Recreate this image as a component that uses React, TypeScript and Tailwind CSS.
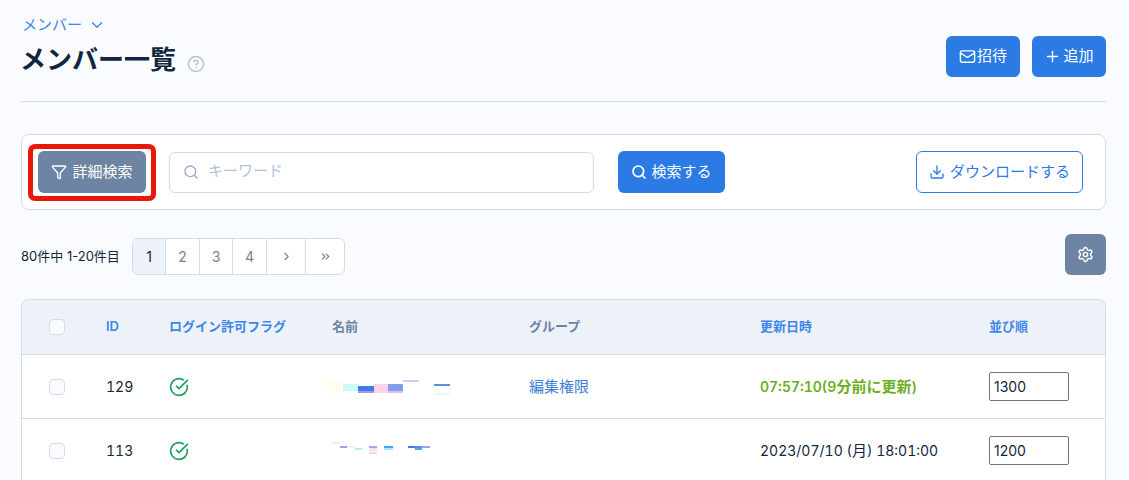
import { ChevronDown, ChevronRight, ChevronsRight, CircleCheckBig, CircleHelp, Download, Funnel, Mail, Plus, Search, Settings } from "lucide-react";

const font = "font-['Inter','Noto_Sans_CJK_JP',sans-serif]";
const cols = "grid grid-cols-[84px_63px_163px_197px_231px_229px_1fr] items-center";

const row1 = [
  [-5, 3, 16, 13, "#fffff0"],
  [11, 7, 15, 7, "#ccf9fd"],
  [26, 9, 16, 5, "#3a7de6"],
  [26, 14, 16, 2, "#b192e0"],
  [42, 7, 14, 9, "#fdd3e8"],
  [56, 7, 15, 7, "#7f9fe8"],
  [56, 14, 15, 2, "#f0b8e4"],
  [71, 3, 16, 2, "#c5cff0"],
  [102, 7, 16, 2, "#5b8ee6"],
  [102, 16, 16, 2, "#f3f3f5"],
] as const;

const row2 = [
  [0, 1, 8, 2, "#fdeaee"],
  [8, 5, 7, 2, "#8ea8e8"],
  [15, 5, 8, 2, "#fdeef2"],
  [23, 7, 7, 2, "#b5ebfb"],
  [37, 5, 8, 2, "#bd98e6"],
  [37, 7, 8, 3, "#fcdde8"],
  [37, 11, 8, 2, "#e4d8ee"],
  [52, 5, 9, 2, "#3fa9f5"],
  [52, 7, 9, 2, "#a8e8fb"],
  [76, 5, 7, 2, "#3a7de6"],
  [83, 5, 7, 2, "#5b8ee6"],
  [83, 7, 7, 2, "#45aaf2"],
  [90, 5, 8, 2, "#93a8ea"],
] as const;

function Blurred({ blocks }: { blocks: readonly (readonly [number, number, number, number, string])[] }) {
  return (
    <svg width="130" height="20" className="overflow-visible">
      {blocks.map(([x, y, w, h, c], i) => (
        <rect key={i} x={x} y={y} width={w} height={h} fill={c} />
      ))}
    </svg>
  );
}

function Check() {
  return <div className="ml-[27px] w-4 h-4 rounded-[4px] border border-[#d2ddec] bg-[#f9fbfd]" />;
}

function OrderInput({ value }: { value: string }) {
  return (
    <input
      defaultValue={value}
      className="w-20 h-[29px] px-1 border border-[#767676] rounded-[2px] bg-white text-sm normal-nums text-[#12263f] outline-none"
    />
  );
}

export default function App() {
  return (
    <div className={`${font} h-[480px] overflow-hidden bg-[#fafbfe] pl-[21px] pr-[23px] text-[#12263f]`}>
      <header className="flex justify-between border-b border-[#d2ddec] h-[102px]">
        <div>
          <div className="pt-[15px] pl-px flex items-center gap-[6px] text-[15px] leading-[20px] text-[#3f86ea]">
            メンバー <ChevronDown size={18} strokeWidth={1.75} />
          </div>
          <div className="mt-[6px] -ml-px flex items-center gap-[11px]">
            <h1 className="text-[26px] leading-[38px] font-bold">メンバー一覧</h1>
            <CircleHelp size={18} className="text-[#b1c2d9] mt-[7px]" />
          </div>
        </div>
        <div className="pt-9 flex gap-3">
          <button className="w-[74px] h-[41px] flex items-center justify-center gap-px rounded-md bg-[#2c7be5] text-[15px] text-white">
            <Mail size={17} /> 招待
          </button>
          <button className="w-[74px] h-[41px] flex items-center justify-center gap-[2px] rounded-md bg-[#2c7be5] text-[15px] text-white">
            <Plus size={17} /> 追加
          </button>
        </div>
      </header>

      <section className="mt-8 h-[76px] flex items-center rounded-lg border border-[#d2ddec] bg-white pl-4 pr-[22px] relative">
        <button className="w-[108px] h-[42px] flex items-center justify-center gap-[5px] rounded-md bg-[#6e84a3] text-[15px] text-white">
          <Funnel size={16} /> 詳細検索
        </button>
        <div className="absolute left-[6px] top-[9px] w-[128px] h-[57px] rounded-[7px] border-[5px] border-[#e8170a]" />
        <div className="ml-[23px] w-[425px] h-[41px] flex items-center rounded-md border border-[#d2ddec] bg-white px-[13px] gap-[9px]">
          <Search size={16} className="text-[#95aac9]" />
          <span className="text-[15px] mb-[2px] text-[#b1c2d9]">キーワード</span>
        </div>
        <button className="ml-6 w-[107px] h-[42px] flex items-center justify-center gap-[4px] rounded-md bg-[#2c7be5] text-[15px] text-white">
          <Search size={16} strokeWidth={2.5} /> 検索する
        </button>
        <button className="ml-auto w-[167px] h-[42px] flex items-center justify-center gap-[5px] rounded-md border border-[#2c7be5] bg-white text-[15px] text-[#2c7be5]">
          <Download size={16} /> ダウンロードする
        </button>
      </section>

      <div className="mt-6 flex justify-between items-start h-[41px]">
        <div className="flex items-center mt-1">
          <span className="text-[13px] w-[111px]">80件中 1-20件目</span>
          <div className="flex h-[37px] rounded-md border border-[#d2ddec] bg-white text-sm text-[#6e84a3] divide-x divide-[#d2ddec] overflow-hidden">
            <span className="w-[33px] flex items-center justify-center bg-[#edf2f9] text-[#12263f]">1</span>
            <span className="w-[34px] flex items-center justify-center">2</span>
            <span className="w-[33px] flex items-center justify-center">3</span>
            <span className="w-[34px] flex items-center justify-center">4</span>
            <span className="w-[39px] flex items-center justify-center"><ChevronRight size={13} /></span>
            <span className="w-[38px] flex items-center justify-center"><ChevronsRight size={13} /></span>
          </div>
        </div>
        <button className="w-[41px] h-[41px] flex items-center justify-center rounded-md bg-[#6e84a3] text-white">
          <Settings size={17} />
        </button>
      </div>

      <section className="mt-6 rounded-t-lg border border-[#d2ddec] border-b-0 bg-white">
        <div className={`${cols} h-[55px] rounded-t-lg bg-[#edf2f9] border-b border-[#d2ddec] text-[13px] font-semibold text-[#3f86ea]`}>
          <Check />
          <span>ID</span>
          <span>ログイン許可フラグ</span>
          <span className="text-[#6e84a3]">名前</span>
          <span className="text-[#6e84a3]">グループ</span>
          <span>更新日時</span>
          <span>並び順</span>
        </div>
        <div className={`${cols} h-16 border-b border-[#d2ddec] text-sm tabular-nums`}>
          <Check />
          <span>129</span>
          <CircleCheckBig size={20} className="text-[#1ca45e]" />
          <Blurred blocks={row1} />
          <span className="text-[15px] text-[#3f7fd8]">編集権限</span>
          <span className="font-semibold text-[#6bb022]">
            07:57:10(9<span className="text-[15px]">分前に更新</span>)
          </span>
          <OrderInput value="1300" />
        </div>
        <div className={`${cols} h-[63px] text-sm tabular-nums`}>
          <Check />
          <span>113</span>
          <CircleCheckBig size={20} className="text-[#1ca45e]" />
          <Blurred blocks={row2} />
          <span />
          <span>
            2023/07/10 (<span className="text-[15px]">月</span>) 18:01:00
          </span>
          <OrderInput value="1200" />
        </div>
      </section>
    </div>
  );
}
